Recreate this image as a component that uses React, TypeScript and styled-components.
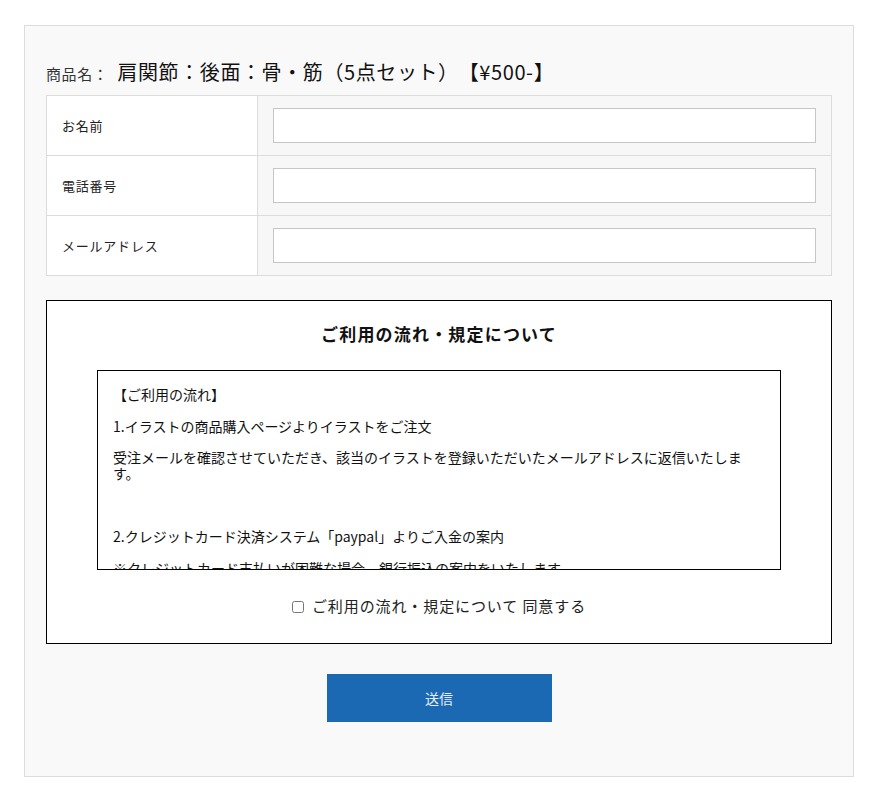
import React from "react";
import styled, { createGlobalStyle } from "styled-components";

const Global = createGlobalStyle`
  html, body { margin: 0; padding: 0; background: #fff; }
  body {
    font-family: "Noto Sans CJK JP", "DejaVu Sans", sans-serif;
    color: #222;
    text-spacing-trim: space-all;
  }
  * { box-sizing: border-box; }
`;

const Page = styled.div`
  padding: 25px 16px 22px 24px;
`;

const Panel = styled.form`
  width: 830px;
  background: #f9f9f9;
  border: 1px solid #dcdcdc;
  padding: 31px 21px 54px 21px;
  display: flex;
  flex-direction: column;
`;

const Title = styled.h2`
  margin: 0 0 6px 0;
  font-weight: normal;
  display: flex;
  align-items: baseline;
  gap: 9px;
  line-height: 30px;
`;

const TitleLabel = styled.span`
  font-size: 15px;
  letter-spacing: 0.04em;
  color: #333;
`;

const TitleName = styled.span`
  font-size: 20px;
  letter-spacing: 0.03em;
  color: #111;
`;

const Table = styled.div`
  display: grid;
  grid-template-columns: 211px 1fr;
  border: 1px solid #dcdcdc;
  border-bottom: none;
`;

const LabelCell = styled.div`
  height: 60px;
  background: #fff;
  border-right: 1px solid #dcdcdc;
  border-bottom: 1px solid #dcdcdc;
  display: flex;
  align-items: center;
  padding-left: 15px;
  font-size: 13px;
  letter-spacing: 0.06em;
  color: #222;
`;

const FieldCell = styled.div`
  height: 60px;
  background: #f7f7f7;
  border-bottom: 1px solid #dcdcdc;
  display: flex;
  align-items: center;
  padding: 0 15px;
`;

const Input = styled.input`
  width: 100%;
  height: 35px;
  border: 1px solid #c6c6c6;
  background: #fff;
  outline: none;
  font-size: 14px;
  padding: 0 8px;
`;

const Agreement = styled.div`
  margin-top: 24px;
  background: #fff;
  border: 1px solid #000;
  padding: 21px 50px 27px 50px;
  display: flex;
  flex-direction: column;
  align-items: center;
`;

const AgreementTitle = styled.h3`
  margin: 0 0 24px 0;
  font-size: 17px;
  font-weight: bold;
  letter-spacing: 0.07em;
  line-height: 24px;
  color: #111;
`;

const ScrollBox = styled.div`
  width: 684px;
  height: 200px;
  border: 1px solid #000;
  overflow: hidden;
  padding: 15px 15px;
  font-size: 14px;
  line-height: 16px;
  color: #111;
`;

const Para = styled.p`
  margin: 0 0 15.5px 0;
  min-height: 16px;
`;

const AgreeRow = styled.label`
  margin-top: 25px;
  display: flex;
  align-items: center;
  gap: 8px;
  font-size: 15px;
  letter-spacing: 0.06em;
  color: #222;
`;

const Check = styled.input`
  width: 12px;
  height: 12px;
  margin: 3px 0 0 0;
`;

const SubmitWrap = styled.div`
  margin-top: 30px;
  display: flex;
  justify-content: center;
`;

const Submit = styled.button`
  width: 225px;
  height: 48px;
  background: #1c69b3;
  border: none;
  color: #e8eef6;
  font-size: 14px;
  font-family: inherit;
`;

const fields = ["お名前", "電話番号", "メールアドレス"];

export default function App() {
  return (
    <Page>
      <Global />
      <Panel onSubmit={(e) => e.preventDefault()}>
        <Title>
          <TitleLabel>商品名：</TitleLabel>
          <TitleName>肩関節：後面：骨・筋（5点セット）【¥500-】</TitleName>
        </Title>
        <Table>
          {fields.map((f) => (
            <React.Fragment key={f}>
              <LabelCell>{f}</LabelCell>
              <FieldCell>
                <Input type="text" />
              </FieldCell>
            </React.Fragment>
          ))}
        </Table>
        <Agreement>
          <AgreementTitle>ご利用の流れ・規定について</AgreementTitle>
          <ScrollBox>
            <Para>【ご利用の流れ】</Para>
            <Para>1.イラストの商品購入ページよりイラストをご注文</Para>
            <Para>受注メールを確認させていただき、該当のイラストを登録いただいたメールアドレスに返信いたします。</Para>
            <Para>&nbsp;</Para>
            <Para>2.クレジットカード決済システム「paypal」よりご入金の案内</Para>
            <Para>※クレジットカード支払いが困難な場合、銀行振込の案内をいたします。</Para>
          </ScrollBox>
          <AgreeRow>
            <Check type="checkbox" />
            ご利用の流れ・規定について 同意する
          </AgreeRow>
        </Agreement>
        <SubmitWrap>
          <Submit type="submit">送信</Submit>
        </SubmitWrap>
      </Panel>
    </Page>
  );
}
